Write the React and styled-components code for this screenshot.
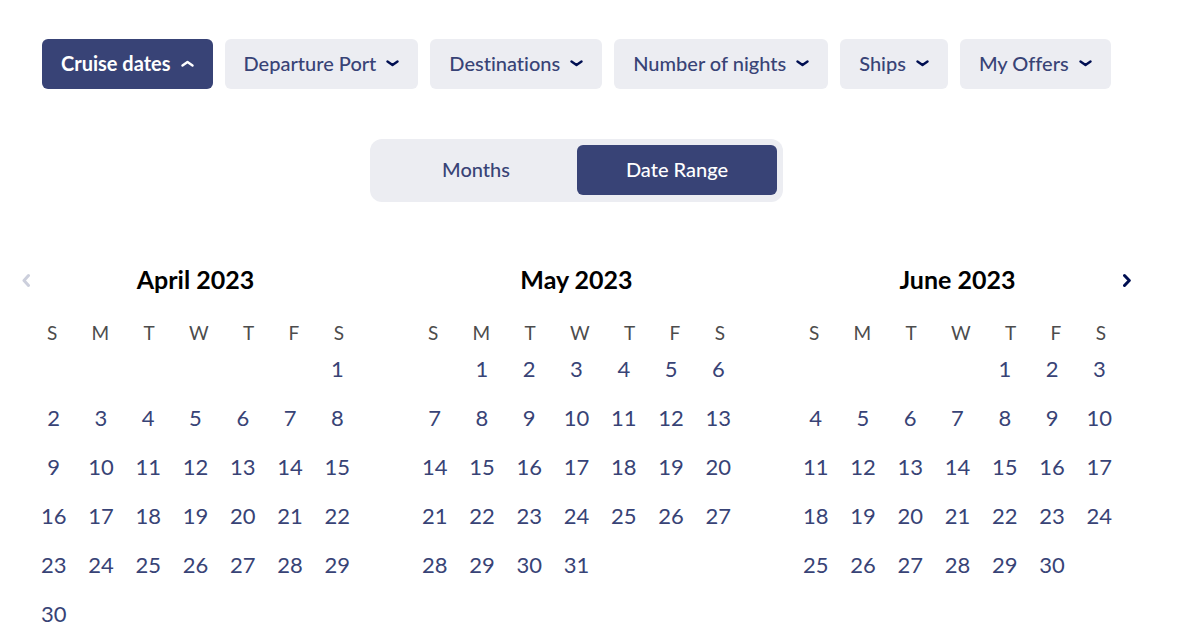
import React, { useState } from "react";
import styled, { createGlobalStyle } from "styled-components";

const GlobalStyle = createGlobalStyle`
  *, *::before, *::after { box-sizing: border-box; }
  body {
    margin: 0;
    background: #fff;
    color: #000;
    font-family: Lato, "Liberation Sans", sans-serif;
    font-variant-ligatures: none;
  }
  button { font-family: inherit; font-variant-ligatures: inherit; border: 0; padding: 0; cursor: pointer; }
`;

const Page = styled.main`
  padding: 39px 25px 0 0;
`;

const FilterBar = styled.div`
  display: flex;
  flex-wrap: wrap;
  gap: 12px;
  padding-left: 42px;
`;

const FilterButton = styled.button`
  display: flex;
  align-items: center;
  justify-content: space-between;
  gap: 10px;
  height: 50px;
  padding: 0 19px 2px;
  border-radius: 6px;
  font-size: 20px;
  line-height: 24px;
  white-space: nowrap;
  font-weight: ${(p) => (p.$active ? 700 : 500)};
  background: ${(p) => (p.$active ? "#384376" : "#ecedf2")};
  color: ${(p) => (p.$active ? "#fff" : "#384376")};
  svg { color: ${(p) => (p.$active ? "#fff" : "#000f52")}; }
`;

const Toggle = styled.div`
  display: grid;
  grid-template-columns: 200px 200px;
  gap: 1px;
  width: fit-content;
  margin: 50px auto 0;
  padding: 6px 6px 7px;
  border-radius: 12px;
  background: #ecedf2;
`;

const ToggleButton = styled.button`
  height: 50px;
  padding-bottom: 2px;
  border-radius: 6px;
  font-size: 20px;
  line-height: 24px;
  font-weight: 500;
  background: ${(p) => (p.$active ? "#384376" : "transparent")};
  color: ${(p) => (p.$active ? "#fff" : "#384376")};
`;

const Calendar = styled.section`
  display: grid;
  grid-template-columns: 30px minmax(0, 1fr) 30px;
  align-items: start;
  margin-top: 62px;
`;

const NavButton = styled.button`
  display: flex;
  align-items: center;
  justify-content: ${(p) => (p.$next ? "flex-start" : "flex-end")};
  height: 32px;
  background: none;
  color: ${(p) => (p.disabled ? "#cccfdc" : "#000f52")};
`;

const Months = styled.div`
  display: grid;
  grid-template-columns: repeat(3, minmax(0, 1fr));
  gap: 50px;
`;

const MonthTable = styled.table`
  display: block;
  caption {
    display: block;
    font-size: 25px;
    line-height: 30px;
    font-weight: 700;
    text-align: center;
  }
`;

const WeekHead = styled.thead`
  display: block;
  padding: 27px 17px 0;
  tr { display: flex; justify-content: space-between; }
  th {
    padding: 0;
    font-size: 19px;
    line-height: 24px;
    font-weight: 400;
    color: #4c4c4c;
  }
`;

const Weeks = styled.tbody`
  display: grid;
  row-gap: 21px;
  padding-top: 10px;
`;

const Week = styled.tr`
  display: grid;
  grid-template-columns: repeat(7, minmax(0, 1fr));
  td { padding: 0; }
`;

const DayButton = styled.button`
  display: block;
  width: 100%;
  height: 28px;
  background: none;
  color: #384376;
  font-size: 22px;
  line-height: 28px;
  text-align: center;
`;

const chevrons = {
  down: { width: 13, height: 8, stroke: 2.4, d: "M1.500 2.500 L6.500 6 L11.500 2.500" },
  up: { width: 13, height: 8, stroke: 2.4, d: "M1.500 6.500 L6.500 3 L11.500 6.500" },
  left: { width: 10, height: 15, stroke: 3, d: "M8.500 2.500 L4 7.500 L8.500 12.500" },
  right: { width: 10, height: 15, stroke: 3, d: "M1.500 2.500 L6.300 7.500 L1.500 12.500" },
};

function Chevron({ dir }) {
  const { width, height, stroke, d } = chevrons[dir];
  return (
    <svg width={width} height={height} viewBox={`0 0 ${width} ${height}`} fill="none" aria-hidden="true">
      <path d={d} stroke="currentColor" strokeWidth={stroke} strokeLinecap="round" strokeLinejoin="round" />
    </svg>
  );
}

const filters = ["Cruise dates", "Departure Port", "Destinations", "Number of nights", "Ships", "My Offers"];
const weekdays = ["S", "M", "T", "W", "T", "F", "S"];
const months = [
  { name: "April 2023", start: 6, days: 30 },
  { name: "May 2023", start: 1, days: 31 },
  { name: "June 2023", start: 4, days: 30 },
];

function Month({ name, start, days }) {
  const count = Math.ceil((start + days) / 7);
  return (
    <MonthTable>
      <caption>{name}</caption>
      <WeekHead>
        <tr>{weekdays.map((d, i) => <th key={i} scope="col">{d}</th>)}</tr>
      </WeekHead>
      <Weeks>
        {Array.from({ length: count }, (_, w) => (
          <Week key={w}>
            {weekdays.map((_, i) => {
              const day = w * 7 + i - start + 1;
              return (
                <td key={i}>
                  {day > 0 && day <= days && <DayButton type="button">{day}</DayButton>}
                </td>
              );
            })}
          </Week>
        ))}
      </Weeks>
    </MonthTable>
  );
}

export default function App() {
  const [open, setOpen] = useState("Cruise dates");
  const [mode, setMode] = useState("Date Range");
  return (
    <>
      <GlobalStyle />
      <Page>
        <FilterBar>
          {filters.map((f) => (
            <FilterButton key={f} type="button" $active={open === f} aria-expanded={open === f} onClick={() => setOpen(f)}>
              {f}
              <Chevron dir={open === f ? "up" : "down"} />
            </FilterButton>
          ))}
        </FilterBar>
        <Toggle>
          {["Months", "Date Range"].map((m) => (
            <ToggleButton key={m} type="button" $active={mode === m} aria-pressed={mode === m} onClick={() => setMode(m)}>
              {m}
            </ToggleButton>
          ))}
        </Toggle>
        <Calendar>
          <NavButton type="button" aria-label="Previous month" disabled><Chevron dir="left" /></NavButton>
          <Months>{months.map((m) => <Month key={m.name} {...m} />)}</Months>
          <NavButton type="button" aria-label="Next month" $next><Chevron dir="right" /></NavButton>
        </Calendar>
      </Page>
    </>
  );
}
